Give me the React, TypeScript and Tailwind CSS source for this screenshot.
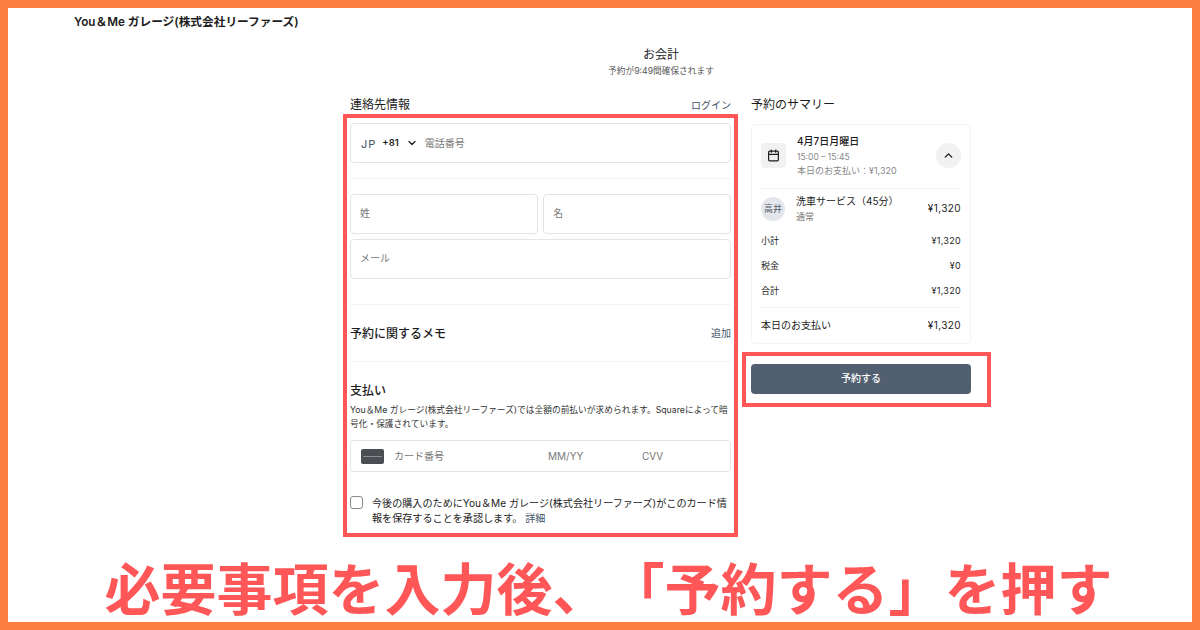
import { Calendar, ChevronDown, ChevronUp } from 'lucide-react'

const totals = [
  { label: '小計', value: '¥1,320' },
  { label: '税金', value: '¥0' },
  { label: '合計', value: '¥1,320' },
]

function Field({ label, className }: { label: string; className?: string }) {
  return (
    <div className={`flex h-10 items-center rounded border border-[#e4e4e4] px-[9px] pb-px text-[10px] text-[#777] ${className ?? ''}`}>
      {label}
    </div>
  )
}

export default function App() {
  return (
    <div className="h-[630px] w-[1200px] overflow-hidden border-[8px] border-[#ff7f41] bg-white font-['Inter','Noto_Sans_CJK_JP',sans-serif] text-[#1c1c1c]">
      <div className="pl-[66px] pt-[6px] text-[11.7px] font-semibold leading-4">You＆Me ガレージ(株式会社リーファーズ)</div>

      <div className="ml-[335px] w-[648px]">
        <div className="w-[636px] pt-[17px] text-center">
          <div className="text-[12px] leading-4">お会計</div>
          <div className="text-[8.7px] leading-4 text-[#555]">予約が9:49間確保されます</div>
        </div>

        <div className="mt-[15px] flex items-start gap-[13px]">
          <div className="w-[395px]">
            <div className="flex h-[20px] items-center justify-between px-[7px] pt-[2px]">
              <span className="text-[12px]">連絡先情報</span>
              <span className="text-[10px] text-[#44546a]">ログイン</span>
            </div>

            <div className="h-[423px] border-4 border-[#ff5757] px-[3px] pt-[5px]">
              <div className="flex h-10 items-center rounded border border-[#e4e4e4] pl-2.5 text-[10px]">
                <span className="mr-[6px] pt-[3px] text-[11px] tracking-[1px] text-[#44546a]">JP</span>
                <span className="text-[9.5px] font-semibold">+81</span>
                <ChevronDown className="ml-[7px] mr-[7px] h-3 w-3" strokeWidth={2.5} />
                <span className="text-[#777]">電話番号</span>
              </div>
              <div className="mt-[15px] border-t border-[#f3f3f3]" />
              <div className="mt-[15px] flex gap-[5px]">
                <Field label="姓" className="flex-1" />
                <Field label="名" className="flex-1" />
              </div>
              <Field label="メール" className="mt-[5px]" />
              <div className="mt-[25px] border-t border-[#f3f3f3]" />
              <div className="flex h-[56px] items-center justify-between pt-px">
                <span className="text-[12px] font-medium">予約に関するメモ</span>
                <span className="text-[10px] text-[#44546a]">追加</span>
              </div>
              <div className="border-t border-[#f3f3f3]" />

              <div className="mt-[21px] text-[12px] font-medium leading-4">支払い</div>
              <p className="mt-[5px] text-[8.72px] leading-[13.5px] text-[#333]">
                You＆Me ガレージ(株式会社リーファーズ)では全額の前払いが求められます。Squareによって暗号化・保護されています。
              </p>
              <div className="mt-[9px] flex h-8 items-center rounded border border-[#e4e4e4] pl-2.5 text-[10px] text-[#777]">
                <svg viewBox="0 0 23 15" className="h-[15px] w-[23px]">
                  <rect width="23" height="15" rx="2" fill="#4a4d52" />
                  <rect x="2" y="7" width="19" height="1" fill="#8a8d91" />
                </svg>
                <span className="ml-[10px] w-[154px]">カード番号</span>
                <span className="w-[94px]">MM/YY</span>
                <span>CVV</span>
              </div>
              <div className="mt-[23px] flex gap-[9px]">
                <div className="mt-[1px] h-[13px] w-[13px] shrink-0 rounded-[3px] border border-[#8a8a8a]" />
                <p className="pt-[1px] text-[10.1px] leading-[15px]">
                  今後の購入のためにYou＆Me ガレージ(株式会社リーファーズ)がこのカード情報を保存することを承認します。 <span className="text-[#44546a]">詳細</span>
                </p>
              </div>
            </div>
          </div>

          <div className="w-[220px]">
            <div className="flex h-[20px] items-center pt-[2px] text-[12px]">予約のサマリー</div>
            <div className="mt-[10px] h-[220px] rounded border border-[#f3f3f3] px-[9px]">
              <div className="flex items-start pt-[9px]">
                <div className="mt-[9px] flex h-[25px] w-[25px] items-center justify-center rounded bg-[#f1f1f1]">
                  <Calendar className="h-[13px] w-[13px]" strokeWidth={2.2} />
                </div>
                <div className="ml-[11px] flex-1">
                  <div className="text-[10px] font-medium leading-[14px]">4月7日月曜日</div>
                  <div className="mt-[2px] text-[8.5px] leading-[14px] text-[#888]">15:00 – 15:45</div>
                  <div className="text-[9px] leading-[14px] text-[#888]">本日のお支払い：¥1,320</div>
                </div>
                <div className="mt-[9px] flex h-[25px] w-[25px] items-center justify-center rounded-full bg-[#f1f1f1]">
                  <ChevronUp className="h-[13px] w-[13px]" strokeWidth={2.5} />
                </div>
              </div>
              <div className="mt-[10px] border-t border-[#f3f3f3]" />
              <div className="flex items-center pt-[4px]">
                <div className="flex h-[24px] w-[24px] items-center justify-center rounded-full bg-[#e3e6eb] text-[9px] text-[#55606e]">高井</div>
                <div className="ml-[11px] flex-1">
                  <div className="text-[10px] leading-[16px]">洗車サービス（45分）</div>
                  <div className="pt-px text-[9px] leading-[14px] text-[#777]">通常</div>
                </div>
                <span className="text-[10px] tracking-[0.4px]">¥1,320</span>
              </div>
              <div className="mt-[4px] flex flex-col">
                {totals.map((row) => (
                  <div key={row.label} className="flex h-[25px] items-center justify-between text-[9px]">
                    <span>{row.label}</span>
                    <span className="tracking-[0.3px]">{row.value}</span>
                  </div>
                ))}
              </div>
              <div className="mt-[4px] border-t border-[#f3f3f3]" />
              <div className="flex h-[34px] items-center justify-between text-[10px]">
                <span>本日のお支払い</span>
                <span className="tracking-[0.4px]">¥1,320</span>
              </div>
            </div>
            <div className="ml-[-9px] mt-[8px] w-[249px] border-4 border-[#ff5757] pb-[9px] pl-[5px] pr-[16px] pt-[8px]">
              <button className="flex h-[30px] w-full items-center justify-center rounded bg-[#525f70] pb-px text-[10px] font-medium text-white">予約する</button>
            </div>
          </div>
        </div>
      </div>

      <div className="mt-[21px] pl-[17px] text-center text-[56px] font-bold leading-[64px] text-[#ff5757] [text-spacing-trim:space-all]">必要事項を入力後、「予約する」を押す</div>
    </div>
  )
}
